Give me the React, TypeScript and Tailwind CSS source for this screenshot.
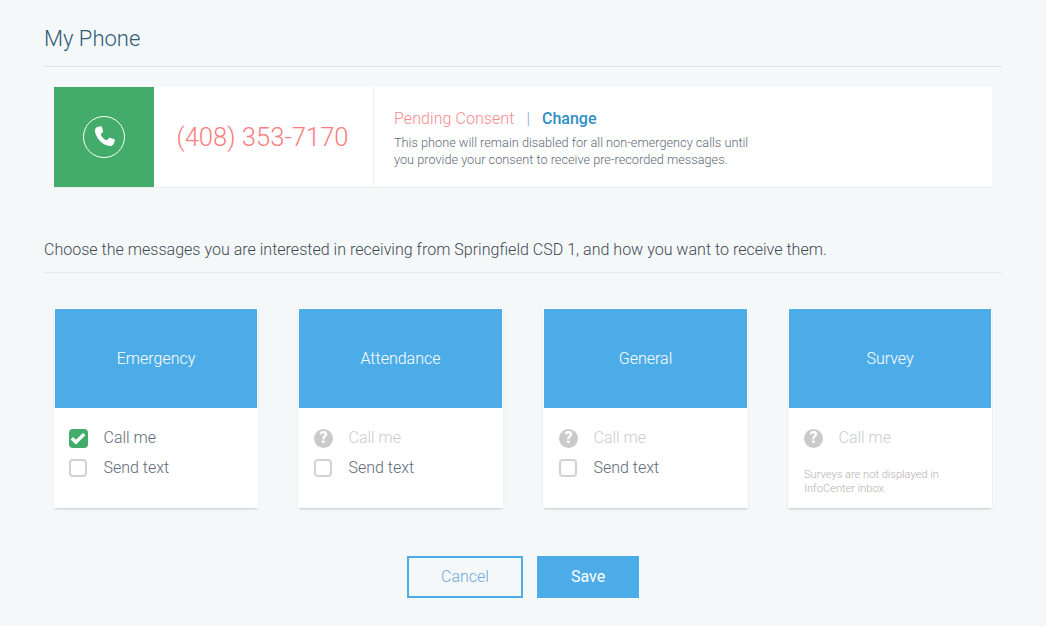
import React from "react";

function Check() {
  return (
    <span className="flex h-[19px] w-[19px] items-center justify-center rounded-[4px] bg-[#43ac6a] -ml-[0.5px]">
      <svg viewBox="0 0 14 14" className="h-[16px] w-[16px]">
        <path d="M1.6 7.2 L5.2 10.6 L12.4 3.6" fill="none" stroke="#fff" strokeWidth="3" />
      </svg>
    </span>
  );
}

function Box() {
  return <span className="block h-[18px] w-[18px] rounded-[4px] border-2 border-[#d2d2d2] bg-white" />;
}

function Question() {
  return (
    <span className="flex h-[19px] w-[19px] items-center justify-center rounded-full bg-[#cacaca] text-[16px] font-extrabold leading-none text-white">
      ?
    </span>
  );
}

function Row({ icon, label, muted }: { icon: React.ReactNode; label: string; muted?: boolean }) {
  return (
    <div className="flex h-[30px] items-center">
      <span className="flex w-[34.5px] items-center">{icon}</span>
      <span className={"text-[16px] leading-[30px] " + (muted ? "text-[#c9ccd1]" : "text-[#5d6b7a]")}>{label}</span>
    </div>
  );
}

function Card({ title, inset, children }: { title: string; inset: string; children: React.ReactNode }) {
  return (
    <div className="h-[200px] bg-white px-px pt-px shadow-[0_2px_2px_-1px_rgba(0,0,0,0.18),0_0_3px_rgba(0,0,0,0.05)]">
      <div className="flex h-[99px] items-center justify-center bg-[#4cace7] text-[16px] text-white">{title}</div>
      <div className={inset + " pr-[14px] pt-[15px]"}>{children}</div>
    </div>
  );
}

export default function App() {
  return (
    <div
      className="h-[626px] w-[1046px] overflow-hidden bg-[#f5f8f9] px-[44px] font-light text-[#4a5662]"
      style={{ fontFamily: "Roboto, 'Liberation Sans', sans-serif" }}
    >
      <h1 className="flex h-[67px] items-center border-b border-[#dfe3e5] pt-[11px] text-[22px] font-light text-[#2f5a78]">
        My Phone
      </h1>

      <div className="mx-[10px] mt-[20px] flex h-[101px] border-b border-[#e9edef] bg-white">
        <div className="flex w-[100px] items-center justify-center bg-[#43ac6a]">
          <span className="flex h-[42px] w-[42px] items-center justify-center rounded-full border border-white">
            <svg viewBox="0 0 24 24" className="h-[26px] w-[26px]" fill="#fff">
              <path d="M6.6 2.6 L9 2 C9.5 1.9 9.9 2.1 10 2.6 L11.2 6.6 C11.3 7 11.2 7.3 10.9 7.6 L9 9.2 C9.4 11.8 12.2 14.6 14.8 15 L16.4 13.1 C16.7 12.8 17 12.7 17.4 12.8 L21.4 14 C21.9 14.2 22.1 14.5 22 15 L21.4 17.4 C21 19.2 19.4 20.6 17.6 20.4 C10.8 19.6 4.4 13.2 3.6 6.4 C3.4 4.6 4.8 3 6.6 2.6 Z" />
            </svg>
          </span>
        </div>
        <div className="flex w-[220px] items-center justify-center border-r border-[#edf0f2] pr-[2px] text-[25.6px] text-[#fb7d7d]">
          (408) 353-7170
        </div>
        <div className="pl-[20px] pt-[21px]">
          <div className="flex h-[22px] items-center text-[16px] leading-[22px]">
            <span className="tracking-[0.07px] text-[#fb8a8e]">Pending Consent</span>
            <span className="mx-[12px] text-[#7fa9d0]">|</span>
            <span className="font-medium text-[#2e8fc4]">Change</span>
          </div>
          <p className="mt-[4px] w-[370px] text-[12.72px] leading-[17px] text-[#5f6b78]">
            This phone will remain disabled for all non-emergency calls until you provide your consent to receive pre-recorded messages.
          </p>
        </div>
      </div>

      <p className="mt-[51px] flex h-[34px] items-start border-b border-[#e6eaec] text-[16.06px] leading-[22px] text-[#3f4a55]">
        Choose the messages you are interested in receiving from Springfield CSD 1, and how you want to receive them.
      </p>

      <div className="mx-[10px] mt-[35px] grid grid-cols-[204px_205px_205px_204px] gap-[40px]">
        <Card title="Emergency" inset="pl-[14px]">
          <Row icon={<Check />} label="Call me" />
          <Row icon={<Box />} label="Send text" />
        </Card>
        <Card title="Attendance" inset="pl-[15px]">
          <Row icon={<Question />} label="Call me" muted />
          <Row icon={<Box />} label="Send text" />
        </Card>
        <Card title="General" inset="pl-[15px]">
          <Row icon={<Question />} label="Call me" muted />
          <Row icon={<Box />} label="Send text" />
        </Card>
        <Card title="Survey" inset="pl-[15px]">
          <Row icon={<Question />} label="Call me" muted />
          <p className="mt-[15px] text-[11.1px] leading-[14px] text-[#b5b0b0]">
            Surveys are not displayed in
            <br />
            InfoCenter inbox
          </p>
        </Card>
      </div>

      <div className="mt-[48px] flex justify-center gap-[14px]">
        <button className="h-[42px] w-[116px] border-2 border-[#4cace7] text-[16px] font-light text-[#6fa8e0]">Cancel</button>
        <button className="h-[42px] w-[102px] bg-[#4cace7] text-[16px] font-normal text-white">Save</button>
      </div>
    </div>
  );
}
